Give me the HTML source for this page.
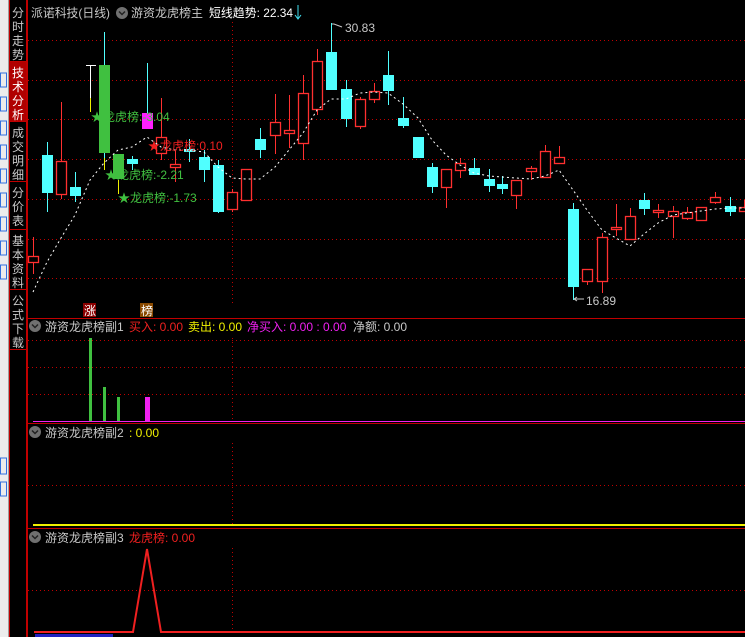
<!DOCTYPE html>
<html><head><meta charset="utf-8"><style>
html,body{margin:0;padding:0;background:#000;width:745px;height:637px;overflow:hidden}
svg{display:block}
text{font-family:"Liberation Sans","Noto Sans CJK SC",sans-serif;font-size:12px}
</style></head><body>
<svg id="s" width="745" height="637" xmlns="http://www.w3.org/2000/svg">
<rect width="745" height="637" fill="#000"/>
<rect x="0" y="0" width="9" height="637" fill="#ececec"/>
<g fill="none" stroke="#3070e0" stroke-width="1">
<rect x="0.5" y="73" width="6" height="14"/><rect x="0.5" y="97" width="6" height="14"/><rect x="0.5" y="121" width="6" height="14"/><rect x="0.5" y="145" width="6" height="14"/><rect x="0.5" y="169" width="6" height="14"/><rect x="0.5" y="193" width="6" height="14"/><rect x="0.5" y="217" width="6" height="14"/><rect x="0.5" y="241" width="6" height="14"/><rect x="0.5" y="265" width="6" height="14"/><rect x="0.5" y="458" width="6" height="16"/><rect x="0.5" y="482" width="6" height="14"/>
</g>
<line x1="8.5" y1="0" x2="8.5" y2="637" stroke="#a0a0a0"/>
<rect x="9" y="0" width="18" height="637" fill="#000"/>
<g stroke="#c00000" fill="none">
<line x1="9.5" y1="0" x2="9.5" y2="637"/><line x1="26.5" y1="0" x2="26.5" y2="637"/>
<line x1="9" y1="61.5" x2="27" y2="61.5"/><line x1="9" y1="121.5" x2="27" y2="121.5"/><line x1="9" y1="181.5" x2="27" y2="181.5"/><line x1="9" y1="229.5" x2="27" y2="229.5"/><line x1="9" y1="289.5" x2="27" y2="289.5"/><line x1="9" y1="349.5" x2="27" y2="349.5"/>
</g>
<rect x="10" y="62" width="16" height="59" fill="#b00000"/>
<g fill="#c8c8c8" text-anchor="middle" style="font-size:13px">
<text x="18" y="17">分</text><text x="18" y="31">时</text><text x="18" y="45">走</text><text x="18" y="59">势</text>
<text x="18" y="77" fill="#fff">技</text><text x="18" y="91" fill="#fff">术</text><text x="18" y="105" fill="#fff">分</text><text x="18" y="119" fill="#fff">析</text>
<text x="18" y="137">成</text><text x="18" y="151">交</text><text x="18" y="165">明</text><text x="18" y="179">细</text>
<text x="18" y="197">分</text><text x="18" y="211">价</text><text x="18" y="225">表</text>
<text x="18" y="245">基</text><text x="18" y="259">本</text><text x="18" y="273">资</text><text x="18" y="287">料</text>
<text x="18" y="305">公</text><text x="18" y="319">式</text><text x="18" y="333">下</text><text x="18" y="347">载</text>
</g>
<g stroke="#c00000" fill="none">
<line x1="27.5" y1="0" x2="27.5" y2="637"/>
<line x1="27" y1="318.5" x2="745" y2="318.5"/><line x1="27" y1="423.5" x2="745" y2="423.5"/><line x1="27" y1="528.5" x2="745" y2="528.5"/>
<g stroke-dasharray="1 3">
<line x1="28" y1="40.5" x2="745" y2="40.5"/><line x1="28" y1="80.5" x2="745" y2="80.5"/><line x1="28" y1="119.5" x2="745" y2="119.5"/><line x1="28" y1="159.5" x2="745" y2="159.5"/><line x1="28" y1="199.5" x2="745" y2="199.5"/><line x1="28" y1="239.5" x2="745" y2="239.5"/><line x1="28" y1="278.5" x2="745" y2="278.5"/>
<line x1="28" y1="340.5" x2="745" y2="340.5"/><line x1="28" y1="367.5" x2="745" y2="367.5"/><line x1="28" y1="394.5" x2="745" y2="394.5"/>
<line x1="28" y1="485.5" x2="745" y2="485.5"/><line x1="28" y1="590.5" x2="745" y2="590.5"/>
<line x1="232.5" y1="22" x2="232.5" y2="304"/><line x1="232.5" y1="338" x2="232.5" y2="422"/><line x1="232.5" y1="443" x2="232.5" y2="527"/><line x1="232.5" y1="548" x2="232.5" y2="632"/>
</g></g>
<g id="c"></g>
<g>
<text x="31" y="17" fill="#c8c8c8" textLength="79" lengthAdjust="spacingAndGlyphs">派诺科技(日线)</text>
<circle cx="122" cy="13" r="6" fill="#707070"/><path d="M119 11.5l3 3 3-3" stroke="#222" fill="none" stroke-width="1.5"/>
<text x="131" y="17" fill="#c8c8c8" textLength="72" lengthAdjust="spacingAndGlyphs">游资龙虎榜主</text>
<text x="209" y="17" fill="#fff" textLength="84" lengthAdjust="spacingAndGlyphs">短线趋势: 22.34</text>
<path d="M298 5v13M295 15l3 4 3-4" stroke="#40e0f0" fill="none"/>
<text x="345" y="32" fill="#c8c8c8">30.83</text><path d="M332 24h2l8 3" stroke="#c8c8c8" fill="none"/>
<text x="586" y="305" fill="#c8c8c8">16.89</text><path d="M574 299l3 -2M574 299l3 2M574 299h10" stroke="#c8c8c8" fill="none"/>
<text x="91" y="121" fill="#40c040">★龙虎榜:-3.04</text>
<text x="148" y="150" fill="#f02020">★龙虎榜:0.10</text>
<text x="105" y="179" fill="#40c040">★龙虎榜:-2.21</text>
<text x="118" y="202" fill="#40c040">★龙虎榜:-1.73</text>
<rect x="83" y="303" width="13" height="14" fill="#8a0000"/><text x="84" y="315" fill="#fff">涨</text>
<rect x="140" y="303" width="13" height="14" fill="#8a4a00"/><text x="141" y="315" fill="#fff">榜</text>
</g>
<circle cx="35" cy="326" r="6" fill="#707070"/><path d="M32 324.5l3 3 3-3" stroke="#222" fill="none" stroke-width="1.5"/>
<text x="45" y="331" fill="#c8c8c8">游资龙虎榜副1</text>
<text x="129" y="331" fill="#f02020">买入: 0.00</text>
<text x="188" y="331" fill="#f0f000">卖出: 0.00</text>
<text x="247" y="331" fill="#f020f0">净买入: 0.00 : 0.00</text>
<text x="353" y="331" fill="#c8c8c8">净额: 0.00</text>
<rect x="89" y="338" width="3" height="84" fill="#40c040"/>
<rect x="103" y="387" width="3" height="35" fill="#40c040"/>
<rect x="117" y="397" width="3" height="25" fill="#40c040"/>
<rect x="145" y="397" width="5" height="25" fill="#f020f0"/>
<line x1="33" y1="421.5" x2="745" y2="421.5" stroke="#f020f0"/>
<circle cx="35" cy="432" r="6" fill="#707070"/><path d="M32 430.5l3 3 3-3" stroke="#222" fill="none" stroke-width="1.5"/>
<text x="45" y="437" fill="#c8c8c8">游资龙虎榜副2</text>
<text x="129" y="437" fill="#f0f000">: 0.00</text>
<rect x="33" y="524" width="712" height="2" fill="#f0f000"/>
<circle cx="35" cy="537" r="6" fill="#707070"/><path d="M32 535.5l3 3 3-3" stroke="#222" fill="none" stroke-width="1.5"/>
<text x="45" y="542" fill="#c8c8c8">游资龙虎榜副3</text>
<text x="129" y="542" fill="#f02020">龙虎榜: 0.00</text>
<polyline points="34,632 133,632 147,549 161,632 745,632" fill="none" stroke="#f02020" stroke-width="2"/>
<rect x="35" y="634" width="78" height="3" fill="#2020c0"/>
</svg>
<script>
var d=[[33,'r',256,262,237,274],[47,'c',155,193,142,212],[61,'r',161,194,102,199],[75,'c',187,196,172,202],[104,'g',65,153,32,158],[118,'g',154,179,154,179],[132,'c',159,164,156,170],[147,'m',113,129,63,129],[161,'r',137,153,98,160],[175,'r',164,167,150,182],[189,'c',149,152,139,162],[204,'c',157,170,150,182],[218,'c',165,212,160,213],[232,'r',192,209,189,212],[246,'r',169,200,169,200],[260,'c',139,150,128,158],[275,'r',122,135,94,154],[289,'r',130,133,95,148],[303,'r',93,143,75,160],[317,'r',61,109,49,115],[331,'c',52,90,23,52],[346,'c',89,119,80,127],[360,'r',99,126,97,129],[374,'r',91,99,83,103],[388,'c',75,91,51,105],[403,'c',118,126,97,128],[418,'c',137,158,137,158],[432,'c',167,187,163,193],[446,'r',169,187,169,208],[460,'r',163,170,158,178],[474,'c',168,175,158,175],[489,'c',179,186,169,192],[502,'c',184,189,176,194],[516,'r',180,195,180,209],[531,'r',168,171,166,180],[545,'r',151,177,145,177],[559,'r',157,163,146,164],[573,'c',209,287,203,300],[587,'r',269,281,269,285],[602,'r',237,281,233,293],[616,'r',227,229,204,236],[630,'r',216,239,208,239],[644,'c',200,209,193,215],[658,'r',210,212,204,218],[673,'r',211,216,206,238],[687,'r',212,218,207,220],[701,'r',207,220,207,220],[715,'r',197,202,192,204],[730,'c',206,212,197,216],[744,'r',207,211,200,212]];
var col={r:'#ff3030',c:'#50ffff',g:'#40c040',m:'#ff20ff'};
var h='';
h+='<line x1="90.5" y1="65" x2="90.5" y2="98" stroke="#fff"/><line x1="86" y1="65.5" x2="96" y2="65.5" stroke="#fff"/><line x1="90.5" y1="98" x2="90.5" y2="112" stroke="#f0f000"/>';
h+='<line x1="104.5" y1="158" x2="104.5" y2="170" stroke="#f0f000"/><line x1="118.5" y1="180" x2="118.5" y2="194" stroke="#f0f000"/>';
d.forEach(function(a){var x=a[0],c=col[a[1]];var wc=(a[1]=='g'||a[1]=='m')?'#50ffff':c;
h+='<line x1="'+(x+.5)+'" y1="'+a[4]+'" x2="'+(x+.5)+'" y2="'+a[5]+'" stroke="'+wc+'"/>';
var hh=Math.max(a[3]-a[2],2);
if(a[1]=='r')h+='<rect x="'+(x-4.5)+'" y="'+(a[2]+.5)+'" width="10" height="'+hh+'" fill="#000" stroke="'+c+'" stroke-width="1.3"/>';
else h+='<rect x="'+(x-5)+'" y="'+a[2]+'" width="11" height="'+hh+'" fill="'+c+'"/>';});
var m=[[33,292],[47,262],[61,238],[75,215],[90,180],[104,163],[118,150],[132,147],[147,137],[161,147],[175,150],[189,150],[204,152],[218,167],[232,178],[246,179],[260,179],[275,167],[289,150],[303,133],[317,110],[331,99],[346,99],[360,93],[374,92],[388,93],[403,104],[418,118],[432,140],[446,155],[460,165],[474,173],[489,176],[502,177],[516,178],[531,179],[545,176],[559,170],[573,190],[587,210],[602,230],[616,238],[630,246],[644,234],[658,223],[673,215],[687,213],[701,211],[715,209],[730,208],[745,208]];
h+='<polyline points="'+m.map(function(p){return p.join(',')}).join(' ')+'" fill="none" stroke="#fff" stroke-dasharray="2 3"/>';
document.getElementById('c').innerHTML=h;
</script>
</body></html>
